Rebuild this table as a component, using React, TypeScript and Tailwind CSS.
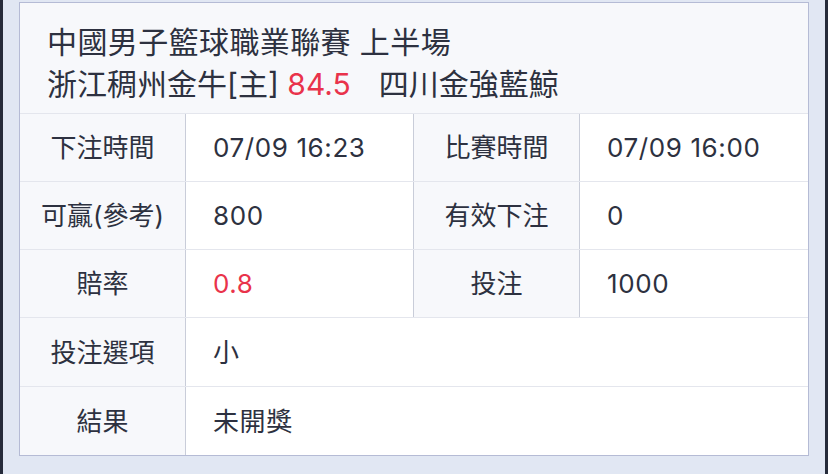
import React from "react";

const font = { fontFamily: '"Inter", "Noto Sans CJK TC", sans-serif' };

type Cell = { label: string; value: string; red?: boolean };

function Label({ text }: { text: string }) {
  return (
    <div className="flex items-center justify-center bg-[#f7f8fb] border-r border-[#c9cdd9]">
      {text}
    </div>
  );
}

function Value({ text, red, border }: { text: string; red?: boolean; border?: boolean }) {
  return (
    <div className={`flex items-center pl-[27px] bg-white tracking-[0.6px] ${border ? "border-r border-[#c9cdd9]" : ""} ${red ? "text-[#e9334b]" : ""}`}>
      {text}
    </div>
  );
}

function PairRow({ a, b }: { a: Cell; b: Cell }) {
  return (
    <div className="grid grid-cols-[166px_228px_166px_1fr] h-[68px] border-b border-[#e4e6ed]">
      <Label text={a.label} />
      <Value text={a.value} red={a.red} border />
      <Label text={b.label} />
      <Value text={b.value} red={b.red} />
    </div>
  );
}

function WideRow({ a, last }: { a: Cell; last?: boolean }) {
  return (
    <div className={`grid grid-cols-[166px_1fr] ${last ? "h-[68px]" : "h-[69px] border-b border-[#e4e6ed]"}`}>
      <Label text={a.label} />
      <Value text={a.value} />
    </div>
  );
}

export default function App() {
  return (
    <div className="w-[828px] h-[474px] bg-[#e1e7f3] flex text-[#2d3140]" style={font}>
      <div className="w-[3px] h-full bg-[#262b3a]" />
      <div className="flex-1 pl-[16px] pt-[2px]">
        <div className="w-[790px] border border-[#b5bbd5] bg-white text-[26px]">
          <div className="h-[111px] bg-[#f7f8fb] border-b border-[#e4e6ed] pt-[18px] pl-[27px] text-[30px] leading-[42px]">
            <div className="tracking-[0.4px]">中國男子籃球職業聯賽 上半場</div>
            <div>
              浙江稠州金牛[主] <span className="text-[#e9334b]">84.5</span>
              <span className="ml-[28px]">四川金強藍鯨</span>
            </div>
          </div>
          <PairRow a={{ label: "下注時間", value: "07/09 16:23" }} b={{ label: "比賽時間", value: "07/09 16:00" }} />
          <PairRow a={{ label: "可贏(參考)", value: "800" }} b={{ label: "有效下注", value: "0" }} />
          <PairRow a={{ label: "賠率", value: "0.8", red: true }} b={{ label: "投注", value: "1000" }} />
          <WideRow a={{ label: "投注選項", value: "小" }} />
          <WideRow a={{ label: "結果", value: "未開獎" }} last />
        </div>
      </div>
      <div className="w-[3px] h-full bg-[#262b3a]" />
    </div>
  );
}
